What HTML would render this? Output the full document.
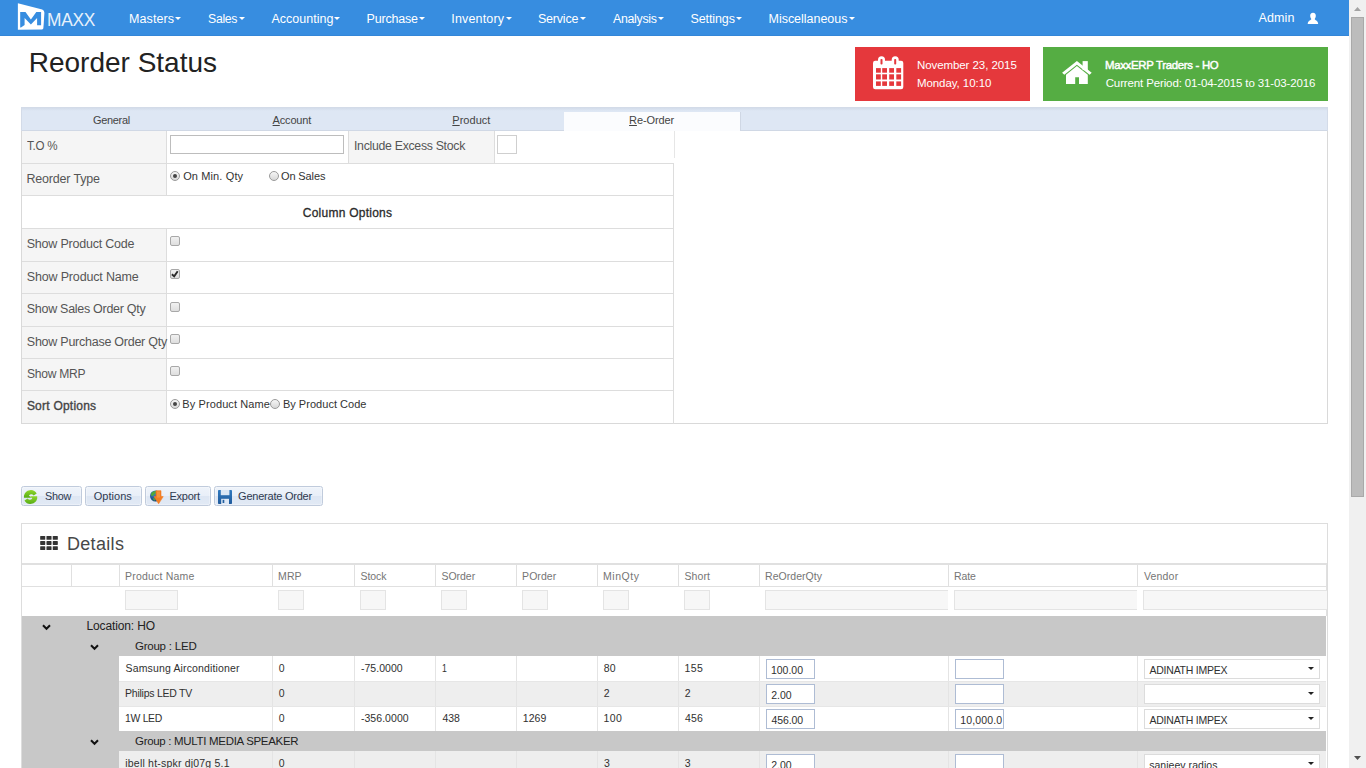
<!DOCTYPE html>
<html><head><meta charset="utf-8"><title>Reorder Status</title>
<style>
*{box-sizing:border-box;margin:0;padding:0}
html,body{width:1366px;height:768px;overflow:hidden;background:#fff;font-family:"Liberation Sans",sans-serif;font-size:13px;color:#444}
.t{position:absolute;white-space:nowrap;line-height:1;display:block}
.a{position:absolute;display:block}
#nav{left:0;top:0;width:1349px;height:36px;background:#378de0;border-bottom:1px solid #3386d8}
#nav .t{color:#fff}
.car{position:absolute;width:0;height:0;border-left:3px solid transparent;border-right:3px solid transparent;border-top:3px solid #fff;top:17px}
#sb{left:1349px;top:0;width:17px;height:768px;background:#f0f0f0}
#sb .th{left:2px;top:17px;width:13px;height:480px;background:#bcbcbc;border:1px solid #a9a9a9}
.tile{top:47px;height:53.5px}
.tile .t{color:#fff}
#tabs{left:21px;top:107px;width:1307px;height:24px;background:linear-gradient(#d3dcea 0,#dee7f4 3px);border-top:1px solid #d3dbe8;border-left:1px solid #d3dbe8;border-right:1px solid #d3dbe8}
#tabs .act{left:542px;top:3.5px;width:177px;height:19.5px;background:#fbfcfe;border-right:1px solid #cfd7e4}
#tabs .bl{top:22px;height:1px;background:#d0d8e5}
#tabs .t{color:#444}
#tabs u{text-decoration:underline}
#pane{left:21px;top:131px;width:1307px;height:293px;border:1px solid #d9d9d9;border-top:none}
.hl{position:absolute;height:1px;background:#ddd}
.vl{position:absolute;width:1px;background:#ddd}
.lab{position:absolute;background:#f5f5f5}
.cb{position:absolute;width:10px;height:10px;border:1px solid #a8a8a8;border-radius:2px;background:linear-gradient(#f1f1f1,#dedede)}
.rb{position:absolute;width:10px;height:10px;border:1px solid #9a9a9a;border-radius:50%;background:linear-gradient(#f6f6f6,#d8d8d8)}
.rb.on:after{content:"";position:absolute;left:2px;top:2px;width:4px;height:4px;border-radius:50%;background:#444}
.btn{position:absolute;top:486px;height:20px;border:1px solid #c0cbdc;border-radius:2.5px;background:linear-gradient(#eef3fa 0%,#e9eff8 50%,#dde6f3 52%,#e2eaf5 100%);box-shadow:inset 0 0 0 1px rgba(255,255,255,.3)}
#det{left:21px;top:523px;width:1307px;height:260px;border:1px solid #ddd}
.fi{position:absolute;top:590px;height:20px;background:#f7f7f7;border:1px solid #e4e4e4}
.gin{position:absolute;height:20px;background:#fff;border:1px solid #aebcd4}
.gsel{position:absolute;height:20px;background:#fff;border:1px solid #dcdcdc}
.dar{position:absolute;width:0;height:0;border-left:3.5px solid transparent;border-right:3.5px solid transparent;border-top:3.8px solid #222}
</style></head><body>
<div id="nav" class="a">
<svg class="a" style="left:17px;top:3px" width="30" height="30" viewBox="0 0 30 30">
<path d="M0.9 0.3 L25.2 6.5 Q27.4 7.2 27.4 9.8 L26.4 25 Q26.3 26.4 25 26.45 L0.9 26.7 Z" fill="#fff"/>
<path d="M3.2 9.1 L8.5 9.1 L13.9 16.4 L19.3 9.1 L24.1 9.1 L24.1 22.3 L20.1 22.3 L20.1 14.9 L13.9 21.5 L7.6 14.9 L7.6 22 L4 24.6 L3.2 24.6 Z" fill="#378de0"/>
</svg>
<span class="t" style="left:46.5px;top:11.00px;font-size:18px;letter-spacing:-0.30px;transform:scaleX(0.964);transform-origin:0 0;color:#fff;opacity:.88;">MAXX</span>
<span class="t" style="left:129.0px;top:13.00px;font-size:12.5px;letter-spacing:0.09px;">Masters</span>
<i class="car" style="left:175.1px"></i>
<span class="t" style="left:207.9px;top:13.00px;font-size:12.5px;letter-spacing:-0.30px;transform:scaleX(0.981);transform-origin:0 0;">Sales</span>
<i class="car" style="left:238.6px"></i>
<span class="t" style="left:271.5px;top:13.00px;font-size:12.5px;">Accounting</span>
<i class="car" style="left:334.1px"></i>
<span class="t" style="left:366.5px;top:13.00px;font-size:12.5px;letter-spacing:-0.18px;">Purchase</span>
<i class="car" style="left:419.1px"></i>
<span class="t" style="left:451.3px;top:13.00px;font-size:12.5px;letter-spacing:0.16px;">Inventory</span>
<i class="car" style="left:505.6px"></i>
<span class="t" style="left:537.9px;top:13.00px;font-size:12.5px;letter-spacing:-0.18px;">Service</span>
<i class="car" style="left:579.6px"></i>
<span class="t" style="left:612.5px;top:13.00px;font-size:12.5px;letter-spacing:-0.30px;transform:scaleX(0.989);transform-origin:0 0;">Analysis</span>
<i class="car" style="left:657.6px"></i>
<span class="t" style="left:690.4px;top:13.00px;font-size:12.5px;letter-spacing:-0.09px;">Settings</span>
<i class="car" style="left:736.1px"></i>
<span class="t" style="left:768.5px;top:13.00px;font-size:12.5px;letter-spacing:-0.02px;">Miscellaneous</span>
<i class="car" style="left:848.6px"></i>
<span class="t" style="left:1258.5px;top:12.00px;font-size:12.5px;letter-spacing:0.10px;">Admin</span>
<svg class="a" style="left:1307px;top:12px" width="12" height="13" viewBox="0 0 12 13"><path d="M6 0.7 C8 0.7 9 2.2 8.8 4 C8.7 5.4 8.2 6.2 7.8 6.7 L7.8 7.5 C9 8.4 11 8.9 11.2 12 L0.7 12 C0.9 8.9 3 8.4 4.2 7.5 L4.2 6.7 C3.8 6.2 3.3 5.4 3.2 4 C3 2.2 4 0.7 6 0.7 Z" fill="#fff"/></svg>
</div>
<div id="sb" class="a"><div class="th a"></div>
<svg class="a" style="left:5px;top:7px" width="7" height="4" viewBox="0 0 7 4"><path d="M0 4 L3.5 0 L7 4 Z" fill="#a3a3a3"/></svg>
<svg class="a" style="left:5px;top:756px" width="7" height="4" viewBox="0 0 7 4"><path d="M0 0 L7 0 L3.5 4 Z" fill="#505050"/></svg>
</div>
<span class="t" style="left:28.7px;top:49.00px;font-size:28px;color:#222;">Reorder Status</span>
<div class="tile a" style="left:855px;width:175px;background:#e5383c">
<svg class="a" style="left:17px;top:8px" width="33" height="36" viewBox="0 0 33 36">
<rect x="1" y="5.7" width="30.3" height="28.6" rx="2.2" fill="#fff"/>
<rect x="6" y="1.2" width="7" height="9" rx="3.5" fill="#fff"/><rect x="19.7" y="1.2" width="7" height="9" rx="3.5" fill="#fff"/>
<g fill="#e5383c"><rect x="8.5" y="4" width="2" height="5.6" rx=".8"/><rect x="22.2" y="4" width="2" height="5.6" rx=".8"/><rect x="4" y="13.1" width="4.8" height="4.6"/><rect x="10.2" y="13.1" width="4.8" height="4.6"/><rect x="17.2" y="13.1" width="4.8" height="4.6"/><rect x="24.3" y="13.1" width="4.8" height="4.6"/><rect x="4" y="19.3" width="4.8" height="5.2"/><rect x="10.2" y="19.3" width="4.8" height="5.2"/><rect x="17.2" y="19.3" width="4.8" height="5.2"/><rect x="24.3" y="19.3" width="4.8" height="5.2"/><rect x="4" y="26.4" width="4.8" height="4.5"/><rect x="10.2" y="26.4" width="4.8" height="4.5"/><rect x="17.2" y="26.4" width="4.8" height="4.5"/><rect x="24.3" y="26.4" width="4.8" height="4.5"/></g></svg>
<span class="t" style="left:61.9px;top:13.00px;font-size:11.5px;letter-spacing:-0.07px;">November 23, 2015</span>
<span class="t" style="left:61.9px;top:31.00px;font-size:11.5px;letter-spacing:-0.06px;">Monday, 10:10</span>
</div>
<div class="tile a" style="left:1043px;width:285px;background:#55ad43">
<svg class="a" style="left:18px;top:13px" width="32" height="25" viewBox="0 0 32 25" fill="#fff">
<path d="M15.9 1.1 L30.7 12.7 L28.6 14.8 L15.9 4.7 L3.3 14.8 L1.1 12.7 Z"/>
<path d="M15.9 6.1 L26.8 14.7 L26.8 24 L18 24 L18 17.3 L14.2 17.3 L14.2 24 L5 24 L5 14.7 Z"/>
<rect x="21.6" y="1.1" width="5.2" height="9"/>
</svg>
<span class="t" style="left:62.4px;top:13.00px;font-size:11.5px;letter-spacing:-0.30px;transform:scaleX(0.990);transform-origin:0 0;-webkit-text-stroke:.45px #fff;">MaxxERP Traders - HO</span>
<span class="t" style="left:62.7px;top:31.00px;font-size:11.5px;letter-spacing:-0.13px;">Current Period: 01-04-2015 to 31-03-2016</span>
</div>
<div id="tabs" class="a"><div class="bl a" style="left:0;width:542px"></div><div class="bl a" style="left:718px;width:587px"></div><div class="act a"></div>
<span class="t" style="left:71.0px;top:7.00px;font-size:11px;letter-spacing:-0.30px;transform:scaleX(0.996);transform-origin:0 0;">General</span>
<span class="t" style="left:250.6px;top:7.00px;font-size:11px;letter-spacing:-0.17px;"><u>A</u>ccount</span>
<span class="t" style="left:430.3px;top:7.00px;font-size:11px;letter-spacing:0.03px;"><u>P</u>roduct</span>
<span class="t" style="left:607.1px;top:7.00px;font-size:11px;letter-spacing:-0.12px;"><u>R</u>e-Order</span>
</div>
<div id="pane" class="a"></div>
<div class="lab" style="left:22px;top:131px;width:144px;height:32px"></div>
<div class="lab" style="left:22px;top:164px;width:144px;height:31px"></div>
<div class="lab" style="left:22px;top:229px;width:144px;height:32px"></div>
<div class="lab" style="left:22px;top:262px;width:144px;height:31px"></div>
<div class="lab" style="left:22px;top:294px;width:144px;height:32px"></div>
<div class="lab" style="left:22px;top:327px;width:144px;height:31px"></div>
<div class="lab" style="left:22px;top:359px;width:144px;height:31px"></div>
<div class="lab" style="left:22px;top:391px;width:144px;height:32px"></div>
<div class="lab" style="left:349px;top:131px;width:145px;height:32px"></div>
<div class="hl" style="left:22px;top:163px;width:652px"></div>
<div class="hl" style="left:22px;top:195px;width:652px"></div>
<div class="hl" style="left:22px;top:228px;width:652px"></div>
<div class="hl" style="left:22px;top:261px;width:652px"></div>
<div class="hl" style="left:22px;top:293px;width:652px"></div>
<div class="hl" style="left:22px;top:326px;width:652px"></div>
<div class="hl" style="left:22px;top:358px;width:652px"></div>
<div class="hl" style="left:22px;top:390px;width:652px"></div>
<div class="hl" style="left:22px;top:423px;width:652px;background:#d9d9d9"></div>
<div class="vl" style="left:166px;top:131px;height:64px"></div>
<div class="vl" style="left:166px;top:229px;height:194px"></div>
<div class="vl" style="left:348px;top:131px;height:32px"></div>
<div class="vl" style="left:494px;top:131px;height:32px"></div>
<div class="vl" style="left:674px;top:131px;height:27px;background:#e6e6e6"></div>
<div class="vl" style="left:673px;top:164px;height:260px"></div>
<div class="a" style="left:170px;top:135px;width:174px;height:19px;border:1px solid #bdbdbd;background:#fff"></div>
<div class="a" style="left:497px;top:135px;width:20px;height:19px;border:1px solid #cfcfcf;background:#fff"></div>
<span class="t" style="left:27.1px;top:140.00px;font-size:12.5px;letter-spacing:-0.30px;transform:scaleX(0.929);transform-origin:0 0;color:#555;">T.O %</span>
<span class="t" style="left:353.9px;top:140.00px;font-size:12.5px;letter-spacing:-0.30px;transform:scaleX(0.984);transform-origin:0 0;color:#555;">Include Excess Stock</span>
<span class="t" style="left:26.5px;top:173.00px;font-size:12.5px;letter-spacing:-0.19px;color:#555;">Reorder Type</span>
<span class="t" style="left:302.8px;top:207.00px;font-size:12px;letter-spacing:0.24px;color:#2b2b2b;-webkit-text-stroke:.3px #2b2b2b;">Column Options</span>
<span class="t" style="left:26.7px;top:238.00px;font-size:12.5px;letter-spacing:-0.21px;color:#555;">Show Product Code</span>
<span class="t" style="left:26.8px;top:271.00px;font-size:12.5px;letter-spacing:-0.17px;color:#555;">Show Product Name</span>
<span class="t" style="left:26.8px;top:303.00px;font-size:12.5px;letter-spacing:-0.29px;color:#555;">Show Sales Order Qty</span>
<span class="t" style="left:26.8px;top:336.00px;font-size:12.5px;letter-spacing:-0.25px;color:#555;">Show Purchase Order Qty</span>
<span class="t" style="left:26.9px;top:368.00px;font-size:12.5px;letter-spacing:-0.30px;transform:scaleX(0.968);transform-origin:0 0;color:#555;">Show MRP</span>
<span class="t" style="left:26.9px;top:400.00px;font-size:12px;letter-spacing:0.23px;color:#444;-webkit-text-stroke:.35px #444;">Sort Options</span>
<i class="rb on" style="left:170px;top:171px"></i>
<span class="t" style="left:183.2px;top:171.00px;font-size:11px;letter-spacing:0.12px;color:#333;">On Min. Qty</span>
<i class="rb" style="left:269px;top:171px"></i>
<span class="t" style="left:281.0px;top:171.00px;font-size:11px;letter-spacing:-0.12px;color:#333;">On Sales</span>
<i class="cb" style="left:170px;top:236px"></i>
<i class="cb" style="left:170px;top:302px"></i>
<i class="cb" style="left:170px;top:334px"></i>
<i class="cb" style="left:170px;top:366px"></i>
<i class="cb" style="left:170px;top:269px"><svg class="a" style="left:-1px;top:-3px" width="12" height="12" viewBox="0 0 12 12"><path d="M1.9 7.2 L4.2 9.4 L7.7 4.3" fill="none" stroke="#2a2a2a" stroke-width="1.9"/></svg></i>
<i class="rb on" style="left:170px;top:399px"></i>
<span class="t" style="left:182.3px;top:399.00px;font-size:11px;letter-spacing:0.10px;color:#333;">By Product Name</span>
<i class="rb" style="left:270px;top:399px"></i>
<span class="t" style="left:282.9px;top:399.00px;font-size:11px;letter-spacing:0.03px;color:#333;">By Product Code</span>
<div class="btn" style="left:21px;width:61px"></div>
<div class="btn" style="left:85px;width:57px"></div>
<div class="btn" style="left:145px;width:66px"></div>
<div class="btn" style="left:214px;width:109px"></div>
<span class="t" style="left:44.9px;top:491.00px;font-size:11px;letter-spacing:-0.30px;transform:scaleX(0.987);transform-origin:0 0;color:#2f3a50;">Show</span>
<span class="t" style="left:93.7px;top:491.00px;font-size:11px;letter-spacing:0.03px;color:#2f3a50;">Options</span>
<span class="t" style="left:169.4px;top:491.00px;font-size:11px;letter-spacing:-0.22px;color:#2f3a50;">Export</span>
<span class="t" style="left:238.1px;top:491.00px;font-size:11px;letter-spacing:-0.23px;color:#2f3a50;">Generate Order</span>
<svg class="a" style="left:24px;top:490px" width="14" height="14" viewBox="0 0 14 14">
<defs><linearGradient id="gg" x1="0" y1="0" x2="0" y2="1"><stop offset="0" stop-color="#8fd62c"/><stop offset="1" stop-color="#58ad16"/></linearGradient></defs>
<path d="M12.7 3.6 A6.9 6.9 0 0 0 0 5.4 L0 7.7 L7.2 7.7 L4.9 5.4 A3.3 3.3 0 0 1 9.7 5.6 Z" fill="url(#gg)"/>
<path d="M0.5 10.4 A6.9 6.9 0 0 0 13.2 8.6 L13.2 6.3 L6 6.3 L8.3 8.6 A3.3 3.3 0 0 1 3.5 8.4 Z" fill="url(#gg)"/></svg>
<svg class="a" style="left:149px;top:489px" width="15" height="16" viewBox="0 0 15 16">
<defs><radialGradient id="gl" cx=".35" cy=".3" r=".8"><stop offset="0" stop-color="#3f86c8"/><stop offset="1" stop-color="#12346a"/></radialGradient></defs>
<circle cx="6.6" cy="7" r="5.6" fill="url(#gl)"/><path d="M2.4 4 Q4.3 1.6 7 2 Q7.6 4.2 5.4 5.4 Q3.8 7.6 2.1 6.6 Q1.8 5.2 2.4 4Z M4 9.2 Q5.8 8.6 6.4 10.6 Q5.8 12.2 4.7 11.6 Z" fill="#4fa83c"/>
<path d="M7 1.7 L12 1.7 L12 7.6 L14.2 7.6 L9.6 14.8 L5 7.6 L7 7.6 Z" fill="#f47d22" stroke="#f47d22" stroke-width=".6" stroke-linejoin="round"/><path d="M8 2.5 L11 2.5 L11 8.6 L9.5 8.6 L8 8.6 Z" fill="#f9a04e" opacity=".6"/></svg>
<svg class="a" style="left:218px;top:490px" width="14" height="14" viewBox="0 0 14 14">
<defs><linearGradient id="fb" x1="0" y1="0" x2="0" y2="1"><stop offset="0" stop-color="#3079bf"/><stop offset="1" stop-color="#1f5a9c"/></linearGradient></defs>
<rect x="0" y="0" width="14" height="14" rx=".8" fill="url(#fb)"/><rect x="2.8" y="0" width="8.6" height="5.2" fill="#d9e6f5"/><rect x="3.2" y="8.8" width="7.8" height="5.2" fill="#dfe9f6"/><rect x="4.6" y="9.8" width="1.7" height="3.2" fill="#245f9f"/></svg>
<div id="det" class="a"></div>
<svg class="a" style="left:40px;top:536px" width="18" height="14" viewBox="0 0 17.4 13.8" fill="#333"><rect x="0.0" y="0.0" width="5" height="3.8" rx=".6"/><rect x="6.2" y="0.0" width="5" height="3.8" rx=".6"/><rect x="12.4" y="0.0" width="5" height="3.8" rx=".6"/><rect x="0.0" y="5.0" width="5" height="3.8" rx=".6"/><rect x="6.2" y="5.0" width="5" height="3.8" rx=".6"/><rect x="12.4" y="5.0" width="5" height="3.8" rx=".6"/><rect x="0.0" y="10.0" width="5" height="3.8" rx=".6"/><rect x="6.2" y="10.0" width="5" height="3.8" rx=".6"/><rect x="12.4" y="10.0" width="5" height="3.8" rx=".6"/></svg>
<span class="t" style="left:66.9px;top:535.00px;font-size:18px;letter-spacing:0.33px;color:#484848;">Details</span>
<div class="hl" style="left:22px;top:563px;width:1305px;height:2px;background:#e0e0e0"></div>
<div class="hl" style="left:22px;top:586px;width:1305px;background:#e0e0e0"></div>
<div class="vl" style="left:71px;top:565px;height:21px;background:#e0e0e0"></div>
<div class="vl" style="left:119px;top:565px;height:21px;background:#e0e0e0"></div>
<div class="vl" style="left:272px;top:565px;height:21px;background:#e0e0e0"></div>
<div class="vl" style="left:354px;top:565px;height:21px;background:#e0e0e0"></div>
<div class="vl" style="left:435px;top:565px;height:21px;background:#e0e0e0"></div>
<div class="vl" style="left:516px;top:565px;height:21px;background:#e0e0e0"></div>
<div class="vl" style="left:597px;top:565px;height:21px;background:#e0e0e0"></div>
<div class="vl" style="left:678px;top:565px;height:21px;background:#e0e0e0"></div>
<div class="vl" style="left:759px;top:565px;height:21px;background:#e0e0e0"></div>
<div class="vl" style="left:948px;top:565px;height:21px;background:#e0e0e0"></div>
<div class="vl" style="left:1137px;top:565px;height:21px;background:#e0e0e0"></div>
<div class="vl" style="left:1326px;top:563px;height:53px;background:#e0e0e0"></div>
<span class="t" style="left:125.1px;top:571.00px;font-size:10.5px;letter-spacing:0.20px;color:#757575;">Product Name</span>
<span class="t" style="left:278.1px;top:571.00px;font-size:10.5px;letter-spacing:0.04px;color:#757575;">MRP</span>
<span class="t" style="left:360.5px;top:571.00px;font-size:10.5px;letter-spacing:-0.07px;color:#757575;">Stock</span>
<span class="t" style="left:441.5px;top:571.00px;font-size:10.5px;letter-spacing:-0.04px;color:#757575;">SOrder</span>
<span class="t" style="left:522.1px;top:571.00px;font-size:10.5px;letter-spacing:0.04px;color:#757575;">POrder</span>
<span class="t" style="left:603.1px;top:571.00px;font-size:10.5px;letter-spacing:0.53px;color:#757575;">MinQty</span>
<span class="t" style="left:684.5px;top:571.00px;font-size:10.5px;letter-spacing:0.11px;color:#757575;">Short</span>
<span class="t" style="left:765.1px;top:571.00px;font-size:10.5px;letter-spacing:0.03px;color:#757575;">ReOrderQty</span>
<span class="t" style="left:954.1px;top:571.00px;font-size:10.5px;letter-spacing:-0.12px;color:#757575;">Rate</span>
<span class="t" style="left:1144.0px;top:571.00px;font-size:10.5px;letter-spacing:0.17px;color:#757575;">Vendor</span>
<div class="fi" style="left:125px;width:53px"></div>
<div class="fi" style="left:278px;width:26px"></div>
<div class="fi" style="left:360px;width:26px"></div>
<div class="fi" style="left:441px;width:26px"></div>
<div class="fi" style="left:522px;width:26px"></div>
<div class="fi" style="left:603px;width:26px"></div>
<div class="fi" style="left:684px;width:26px"></div>
<div class="fi" style="left:765px;width:183px;border-right:none"></div>
<div class="fi" style="left:954px;width:183px;border-right:none"></div>
<div class="fi" style="left:1143px;width:184px;border-right:none"></div>
<div class="a" style="left:22px;top:616px;width:1304px;height:152px;background:#c8c8c8"></div>
<svg class="a" style="left:41.5px;top:624px" width="9" height="7" viewBox="0 0 9 7"><path d="M1 1.2 L4.5 4.8 L8 1.2" fill="none" stroke="#111" stroke-width="2"/></svg>
<span class="t" style="left:86.5px;top:620.00px;font-size:12px;letter-spacing:-0.13px;color:#222;">Location: HO</span>
<svg class="a" style="left:89.5px;top:644px" width="9" height="7" viewBox="0 0 9 7"><path d="M1 1.2 L4.5 4.8 L8 1.2" fill="none" stroke="#111" stroke-width="2"/></svg>
<span class="t" style="left:134.9px;top:641.00px;font-size:11.5px;letter-spacing:-0.21px;color:#222;">Group : LED</span>
<svg class="a" style="left:89.5px;top:739px" width="9" height="7" viewBox="0 0 9 7"><path d="M1 1.2 L4.5 4.8 L8 1.2" fill="none" stroke="#111" stroke-width="2"/></svg>
<span class="t" style="left:134.9px;top:736.00px;font-size:11.5px;letter-spacing:-0.30px;transform:scaleX(0.998);transform-origin:0 0;color:#222;">Group : MULTI MEDIA SPEAKER</span>
<div class="a" style="left:119px;top:656px;width:1207px;height:25px;background:#fff"></div>
<div class="vl" style="left:272px;top:656px;height:25px;background:#e4e4e4"></div>
<div class="vl" style="left:354px;top:656px;height:25px;background:#e4e4e4"></div>
<div class="vl" style="left:435px;top:656px;height:25px;background:#e4e4e4"></div>
<div class="vl" style="left:516px;top:656px;height:25px;background:#e4e4e4"></div>
<div class="vl" style="left:597px;top:656px;height:25px;background:#e4e4e4"></div>
<div class="vl" style="left:678px;top:656px;height:25px;background:#e4e4e4"></div>
<div class="vl" style="left:759px;top:656px;height:25px;background:#e4e4e4"></div>
<div class="vl" style="left:948px;top:656px;height:25px;background:#e4e4e4"></div>
<div class="vl" style="left:1137px;top:656px;height:25px;background:#e4e4e4"></div>
<div class="a" style="left:119px;top:681px;width:1207px;height:25px;background:#eee"></div>
<div class="vl" style="left:272px;top:681px;height:25px;background:#e4e4e4"></div>
<div class="vl" style="left:354px;top:681px;height:25px;background:#e4e4e4"></div>
<div class="vl" style="left:435px;top:681px;height:25px;background:#e4e4e4"></div>
<div class="vl" style="left:516px;top:681px;height:25px;background:#e4e4e4"></div>
<div class="vl" style="left:597px;top:681px;height:25px;background:#e4e4e4"></div>
<div class="vl" style="left:678px;top:681px;height:25px;background:#e4e4e4"></div>
<div class="vl" style="left:759px;top:681px;height:25px;background:#e4e4e4"></div>
<div class="vl" style="left:948px;top:681px;height:25px;background:#e4e4e4"></div>
<div class="vl" style="left:1137px;top:681px;height:25px;background:#e4e4e4"></div>
<div class="a" style="left:119px;top:706px;width:1207px;height:25px;background:#fff"></div>
<div class="vl" style="left:272px;top:706px;height:25px;background:#e4e4e4"></div>
<div class="vl" style="left:354px;top:706px;height:25px;background:#e4e4e4"></div>
<div class="vl" style="left:435px;top:706px;height:25px;background:#e4e4e4"></div>
<div class="vl" style="left:516px;top:706px;height:25px;background:#e4e4e4"></div>
<div class="vl" style="left:597px;top:706px;height:25px;background:#e4e4e4"></div>
<div class="vl" style="left:678px;top:706px;height:25px;background:#e4e4e4"></div>
<div class="vl" style="left:759px;top:706px;height:25px;background:#e4e4e4"></div>
<div class="vl" style="left:948px;top:706px;height:25px;background:#e4e4e4"></div>
<div class="vl" style="left:1137px;top:706px;height:25px;background:#e4e4e4"></div>
<div class="a" style="left:119px;top:751px;width:1207px;height:25px;background:#eee"></div>
<div class="vl" style="left:272px;top:751px;height:25px;background:#e4e4e4"></div>
<div class="vl" style="left:354px;top:751px;height:25px;background:#e4e4e4"></div>
<div class="vl" style="left:435px;top:751px;height:25px;background:#e4e4e4"></div>
<div class="vl" style="left:516px;top:751px;height:25px;background:#e4e4e4"></div>
<div class="vl" style="left:597px;top:751px;height:25px;background:#e4e4e4"></div>
<div class="vl" style="left:678px;top:751px;height:25px;background:#e4e4e4"></div>
<div class="vl" style="left:759px;top:751px;height:25px;background:#e4e4e4"></div>
<div class="vl" style="left:948px;top:751px;height:25px;background:#e4e4e4"></div>
<div class="vl" style="left:1137px;top:751px;height:25px;background:#e4e4e4"></div>
<div class="hl" style="left:119px;top:681px;width:1207px;background:#e6e6e6"></div>
<div class="hl" style="left:119px;top:706px;width:1207px;background:#e6e6e6"></div>
<span class="t" style="left:125.5px;top:663.00px;font-size:10.5px;letter-spacing:0.15px;color:#303030;">Samsung Airconditioner</span>
<span class="t" style="left:278.8px;top:663.00px;font-size:10.5px;letter-spacing:0.48px;color:#303030;">0</span>
<span class="t" style="left:360.9px;top:663.00px;font-size:10.5px;letter-spacing:0.05px;color:#303030;">-75.0000</span>
<span class="t" style="left:442.1px;top:663.00px;font-size:10.5px;letter-spacing:-0.30px;transform:scaleX(0.828);transform-origin:0 0;color:#303030;">1</span>
<span class="t" style="left:603.8px;top:663.00px;font-size:10.5px;letter-spacing:0.19px;color:#303030;">80</span>
<span class="t" style="left:684.4px;top:663.00px;font-size:10.5px;letter-spacing:0.41px;color:#303030;">155</span>
<div class="gin" style="left:766px;top:659px;width:49px"></div>
<span class="t" style="left:770.9px;top:665.00px;font-size:10.5px;color:#303030;">100.00</span>
<div class="gin" style="left:955px;top:659px;width:49px;overflow:hidden"></div>
<div class="gsel" style="left:1144px;top:659px;width:176px"></div>
<span class="t" style="left:1149.5px;top:665.00px;font-size:10.5px;letter-spacing:-0.24px;color:#303030;">ADINATH IMPEX</span>
<i class="dar" style="left:1308px;top:667.3px"></i>
<span class="t" style="left:125.1px;top:688.00px;font-size:10.5px;letter-spacing:-0.25px;color:#303030;">Philips LED TV</span>
<span class="t" style="left:278.8px;top:688.00px;font-size:10.5px;letter-spacing:0.48px;color:#303030;">0</span>
<span class="t" style="left:603.8px;top:688.00px;font-size:10.5px;letter-spacing:0.22px;color:#303030;">2</span>
<span class="t" style="left:684.7px;top:688.00px;font-size:10.5px;letter-spacing:0.32px;color:#303030;">2</span>
<div class="gin" style="left:766px;top:684px;width:49px"></div>
<span class="t" style="left:771.2px;top:690.00px;font-size:10.5px;color:#303030;">2.00</span>
<div class="gin" style="left:955px;top:684px;width:49px;overflow:hidden"></div>
<div class="gsel" style="left:1144px;top:684px;width:176px"></div>
<i class="dar" style="left:1308px;top:692.3px"></i>
<span class="t" style="left:125.2px;top:713.00px;font-size:10.5px;letter-spacing:-0.30px;transform:scaleX(0.992);transform-origin:0 0;color:#303030;">1W LED</span>
<span class="t" style="left:278.8px;top:713.00px;font-size:10.5px;letter-spacing:0.48px;color:#303030;">0</span>
<span class="t" style="left:360.9px;top:713.00px;font-size:10.5px;letter-spacing:0.06px;color:#303030;">-356.0000</span>
<span class="t" style="left:442.6px;top:713.00px;font-size:10.5px;letter-spacing:-0.16px;color:#303030;">438</span>
<span class="t" style="left:522.8px;top:713.00px;font-size:10.5px;letter-spacing:0.05px;color:#303030;">1269</span>
<span class="t" style="left:603.5px;top:713.00px;font-size:10.5px;letter-spacing:0.35px;color:#303030;">100</span>
<span class="t" style="left:685.0px;top:713.00px;font-size:10.5px;letter-spacing:0.14px;color:#303030;">456</span>
<div class="gin" style="left:766px;top:709px;width:49px"></div>
<span class="t" style="left:771.5px;top:715.00px;font-size:10.5px;letter-spacing:-0.11px;color:#303030;">456.00</span>
<div class="gin" style="left:955px;top:709px;width:49px;overflow:hidden"><span class="t" style="left:4.2px;top:5.00px;font-size:10.5px;color:#303030;letter-spacing:.15px;">10,000.0</span></div>
<div class="gsel" style="left:1144px;top:709px;width:176px"></div>
<span class="t" style="left:1149.5px;top:715.00px;font-size:10.5px;letter-spacing:-0.24px;color:#303030;">ADINATH IMPEX</span>
<i class="dar" style="left:1308px;top:717.3px"></i>
<span class="t" style="left:125.3px;top:758.00px;font-size:10.5px;letter-spacing:0.20px;color:#303030;">ibell ht-spkr dj07g 5.1</span>
<span class="t" style="left:278.8px;top:758.00px;font-size:10.5px;letter-spacing:0.48px;color:#303030;">0</span>
<span class="t" style="left:603.9px;top:758.00px;font-size:10.5px;letter-spacing:0.02px;color:#303030;">3</span>
<span class="t" style="left:684.8px;top:758.00px;font-size:10.5px;letter-spacing:0.12px;color:#303030;">3</span>
<div class="gin" style="left:766px;top:754px;width:49px"></div>
<span class="t" style="left:771.2px;top:760.00px;font-size:10.5px;color:#303030;">2.00</span>
<div class="gin" style="left:955px;top:754px;width:49px;overflow:hidden"></div>
<div class="gsel" style="left:1144px;top:754px;width:176px"></div>
<span class="t" style="left:1149.2px;top:760.00px;font-size:10.5px;letter-spacing:0.04px;color:#303030;">sanjeev radios</span>
<i class="dar" style="left:1308px;top:762.3px"></i>
</body></html>
